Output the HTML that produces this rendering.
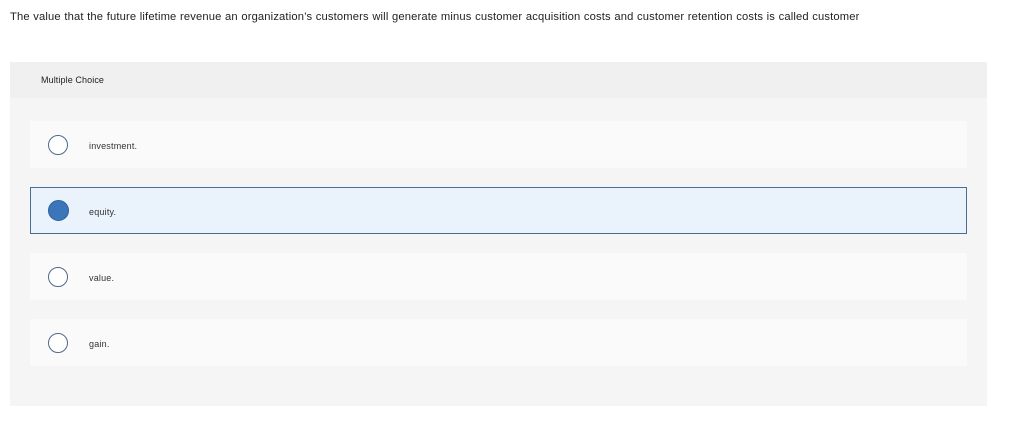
<!DOCTYPE html>
<html><head><meta charset="utf-8"><style>
*{margin:0;padding:0;box-sizing:border-box}
body{width:1024px;height:433px;background:#fff;font-family:"Liberation Sans",sans-serif;color:#222;position:relative;overflow:hidden}
.q{position:absolute;left:10px;top:11px;font-size:11.2px;letter-spacing:0.15px;word-spacing:0.3px}
.panel{position:absolute;left:10px;top:62px;width:977px;height:344px;background:#f5f5f5}
.hd{height:36px;background:#f0f0f0;font-size:9px;padding:13px 0 0 31px;letter-spacing:0.1px}
.opt{position:absolute;left:20px;width:937px;height:47px;background:#fafafa}
.opt.sel{background:#eaf2fb;border:1px solid #4a6d94}
.r{position:absolute;left:18px;top:14px;width:20px;height:20px;border-radius:50%;border:1px solid #506a8a;background:#fff}
.sel .r{background:#3b76bb;border-color:#2f5f99;left:17px;top:12px;width:21px;height:21px}
.t{position:absolute;left:59px;top:20px;font-size:9px;color:#333;letter-spacing:0.2px}
.sel .t{left:58px;top:19px}
</style></head><body>
<div class="q">The value that the future lifetime revenue an organization’s customers will generate minus customer acquisition costs and customer retention costs is called customer</div>
<div class="panel">
<div class="hd">Multiple Choice</div>
<div class="opt" style="top:59px"><div class="r"></div><div class="t">investment.</div></div>
<div class="opt sel" style="top:125px"><div class="r"></div><div class="t">equity.</div></div>
<div class="opt" style="top:191px"><div class="r"></div><div class="t">value.</div></div>
<div class="opt" style="top:257px"><div class="r"></div><div class="t">gain.</div></div>
</div>
</body></html>
